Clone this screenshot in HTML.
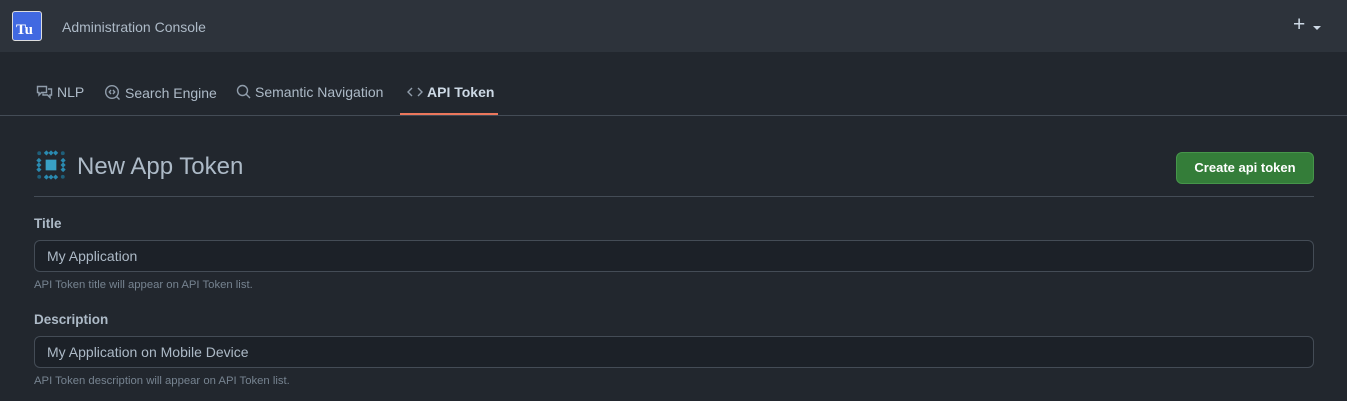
<!DOCTYPE html>
<html><head><meta charset="utf-8"><style>
*{box-sizing:border-box;margin:0;padding:0}
body{width:1347px;height:401px;overflow:hidden;background:#22272e;font-family:"Liberation Sans",sans-serif;color:#adbac7;position:relative}
.hdr{position:absolute;left:0;top:0;width:1347px;height:52px;background:#2d333b}
.logo{position:absolute;left:12px;top:11px;width:30px;height:30px;background:#4169e1;border:1px solid #ddd;border-radius:3px;color:#fff;font-family:"Liberation Serif",serif;font-size:15px;font-weight:bold;padding:11px 0 0 3px;line-height:14px}
.hdr .t{position:absolute;left:62px;top:19px;font-size:14px;color:#adbac7}
.plus{position:absolute;left:1293px;top:15px;font-size:21px;color:#cdd9e5;line-height:20px}
.car{position:absolute;left:1313px;top:26px;width:0;height:0;border-left:4px solid transparent;border-right:4px solid transparent;border-top:4px solid #cdd9e5}
.tabs{position:absolute;left:0;top:52px;width:1347px;height:64px;border-bottom:1px solid #444c56}
.tab{position:absolute;top:32px;font-size:14px;color:#adbac7;display:flex;align-items:center;gap:4px}
.tab svg{stroke:#909dab;fill:none;stroke-width:1.4}
.ul{position:absolute;left:400px;top:113px;width:98px;height:2px;background:#ec775c}
h1{position:absolute;left:77px;top:153px;font-size:24px;font-weight:normal;color:#adbac7}
.div{position:absolute;left:34px;top:196px;width:1280px;height:1px;background:#444c56}
.btn{position:absolute;left:1176px;top:152px;width:138px;height:32px;background:#347d39;border:1px solid #46954a;border-radius:6px;color:#fff;font-size:13px;font-weight:bold;text-align:center;line-height:30px}
.lbl{position:absolute;left:34px;font-size:13.5px;font-weight:bold;color:#adbac7}
.inp{position:absolute;left:34px;width:1280px;height:32px;background:#1c2128;border:1px solid #444c56;border-radius:6px;font-size:14px;padding:7px 12px;color:#adbac7}
.hint{position:absolute;left:34px;font-size:11.3px;color:#768390}
</style></head><body>
<div class="hdr"><div class="logo">Tu</div><div class="t">Administration Console</div><div class="plus">+</div><div class="car"></div></div>
<div class="tabs"></div>
<div class="tab" style="left:36px;top:84px"><svg width="17" height="16" viewBox="0 0 17 16"><path d="M1.5 2.5h9v6h-5l-2.5 2.5v-2.5h-1.5z"/><path d="M12 5h3.5v6h-1.5v2.5l-2.5-2.5h-4.5v-1.5"/></svg>NLP</div>
<div class="tab" style="left:104px;top:84px"><svg width="17" height="17" viewBox="0 0 17 17"><circle cx="8" cy="8" r="6.3"/><path d="M12.5 12.5l3 3M7 6l-1.7 2 1.7 2M9 6l1.7 2-1.7 2"/></svg>Search Engine</div>
<div class="tab" style="left:236px;top:84px"><svg width="15" height="16" viewBox="0 0 15 16"><circle cx="6.5" cy="6.5" r="5"/><path d="M10 10l4 4"/></svg>Semantic Navigation</div>
<div class="tab" style="left:407px;top:84px;font-weight:bold;color:#cdd9e5"><svg width="16" height="14" viewBox="0 0 16 14"><path d="M5 3l-4 4 4 4M11 3l4 4-4 4"/></svg>API Token</div>
<div class="ul"></div>
<svg style="position:absolute;left:36px;top:150px" width="30" height="30" viewBox="0 0 28 28"><rect x="9" y="9" width="10" height="10" fill="#39a0c5"/>
<g fill="#2a8ab0"><rect x="8" y="1" width="3.4" height="3.4" transform="rotate(45 9.7 2.7)"/><rect x="12.3" y="1" width="3.4" height="3.4" transform="rotate(45 14 2.7)"/><rect x="16.6" y="1" width="3.4" height="3.4" transform="rotate(45 18.3 2.7)"/>
<rect x="8" y="23.6" width="3.4" height="3.4" transform="rotate(45 9.7 25.3)"/><rect x="12.3" y="23.6" width="3.4" height="3.4" transform="rotate(45 14 25.3)"/><rect x="16.6" y="23.6" width="3.4" height="3.4" transform="rotate(45 18.3 25.3)"/>
<rect x="1" y="8" width="3.4" height="3.4" transform="rotate(45 2.7 9.7)"/><rect x="1" y="12.3" width="3.4" height="3.4" transform="rotate(45 2.7 14)"/><rect x="1" y="16.6" width="3.4" height="3.4" transform="rotate(45 2.7 18.3)"/>
<rect x="23.6" y="8" width="3.4" height="3.4" transform="rotate(45 25.3 9.7)"/><rect x="23.6" y="12.3" width="3.4" height="3.4" transform="rotate(45 25.3 14)"/><rect x="23.6" y="16.6" width="3.4" height="3.4" transform="rotate(45 25.3 18.3)"/></g>
<g fill="#1f5f7a"><circle cx="3" cy="3" r="1.8"/><circle cx="25" cy="3" r="1.8"/><circle cx="3" cy="25" r="1.8"/><circle cx="25" cy="25" r="1.8"/></g></svg>
<h1>New App Token</h1>
<div class="btn">Create api token</div>
<div class="div"></div>
<div class="lbl" style="top:216px">Title</div>
<div class="inp" style="top:240px">My Application</div>
<div class="hint" style="top:279px">API Token title will appear on API Token list.</div>
<div class="lbl" style="top:312px">Description</div>
<div class="inp" style="top:336px">My Application on Mobile Device</div>
<div class="hint" style="top:375px">API Token description will appear on API Token list.</div>
</body></html>
